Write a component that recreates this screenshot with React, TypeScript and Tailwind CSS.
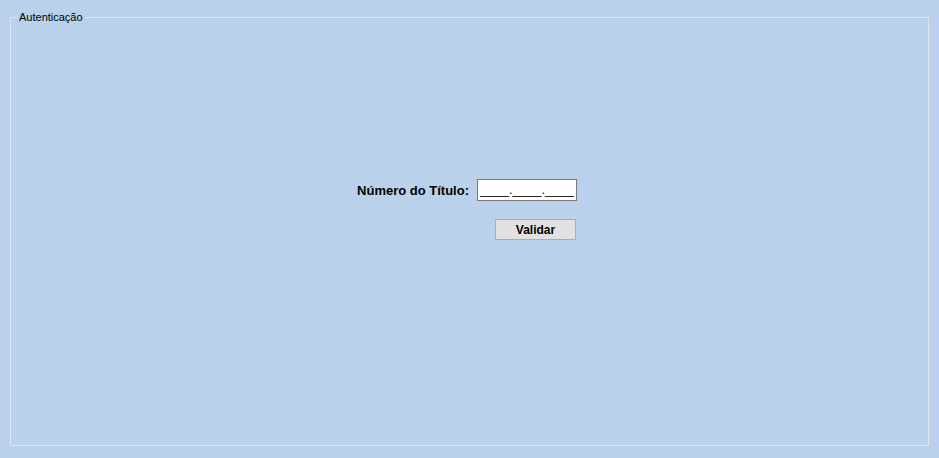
export default function App() {
  return (
    <div className="w-[939px] h-[458px] bg-[#b9d1ea] pt-[17px] pl-[10px] font-['Liberation_Sans',Arial,sans-serif] text-black">
      <div className="relative w-[919px] h-[429px] border border-[#dce4ec]">
        {/* legend sits over the top border */}
        <span className="absolute left-[6px] top-[-7px] bg-[#b9d1ea] px-[2px] text-[11px] leading-[13px]">
          Autenticação
        </span>

        <div className="flex flex-col pt-[161px] pl-[300px]">
          <div className="flex items-center">
            <label className="w-[158px] text-right text-[13px] font-bold leading-[15px]">
              Número do Título:
            </label>
            <div className="ml-[8px] w-[100px] h-[22px] bg-white border border-[#7a7a7a] pl-[2px] text-[13px] leading-[19px]">
              ____.____.____
            </div>
          </div>
          <button className="mt-[18px] ml-[184px] w-[81px] h-[21px] bg-[#e1e1e1] border border-[#adadad] pt-[2px] text-[12px] font-bold leading-[17px] text-center">
            Validar
          </button>
        </div>
      </div>
    </div>
  );
}
